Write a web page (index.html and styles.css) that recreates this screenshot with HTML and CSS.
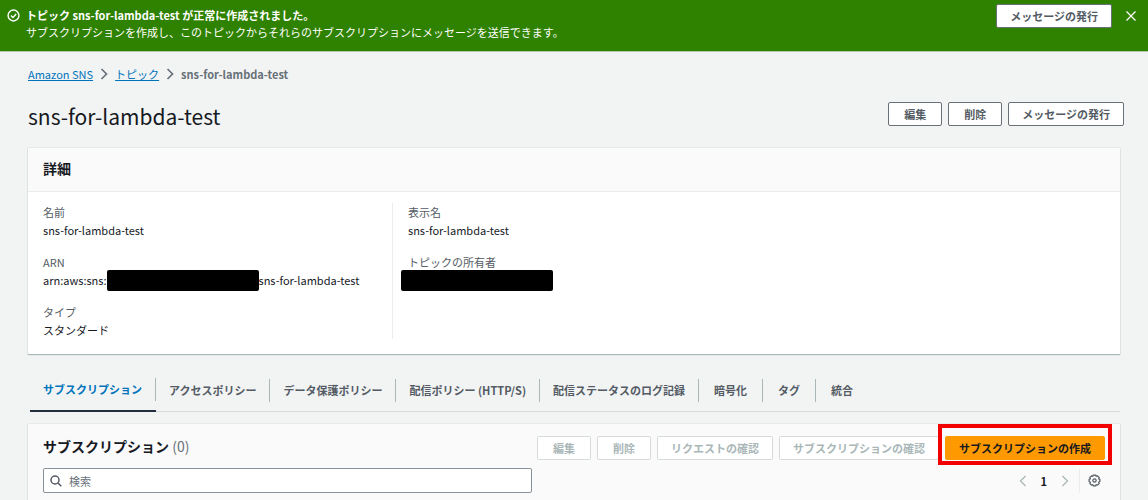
FILE: index.html
```html
<!DOCTYPE html>
<html lang="ja">
<head>
<meta charset="utf-8">
<meta name="viewport" content="width=device-width, initial-scale=1">
<title>sns-for-lambda-test - Amazon SNS</title>
<link rel="stylesheet" href="styles.css">
</head>
<body>
<div class="flash" role="status">
  <svg class="flash-icon" viewBox="0 0 16 16" aria-hidden="true"><circle cx="8" cy="8" r="6.7"/><path d="M4.8 8l2.5 2.5 4-4.4"/></svg>
  <div class="flash-text">
    <strong>トピック sns-for-lambda-test が正常に作成されました。</strong>
    <p>サブスクリプションを作成し、このトピックからそれらのサブスクリプションにメッセージを送信できます。</p>
  </div>
  <button class="btn" type="button">メッセージの発行</button>
  <button class="close" type="button" aria-label="閉じる"><svg viewBox="0 0 12 12"><path d="M1.5 1.5l9 9M10.5 1.5l-9 9"/></svg></button>
</div>
<main class="page">
  <nav class="crumbs" aria-label="パンくず">
    <a href="#">Amazon SNS</a>
    <svg viewBox="0 0 8 12" aria-hidden="true"><path d="M1.5 1l5 5-5 5"/></svg>
    <a href="#">トピック</a>
    <svg viewBox="0 0 8 12" aria-hidden="true"><path d="M1.5 1l5 5-5 5"/></svg>
    <span>sns-for-lambda-test</span>
  </nav>
  <header class="title-row">
    <h1>sns-for-lambda-test</h1>
    <div class="actions">
      <button class="btn" type="button">編集</button>
      <button class="btn" type="button">削除</button>
      <button class="btn" type="button">メッセージの発行</button>
    </div>
  </header>
  <section class="panel">
    <div class="panel-head"><h2>詳細</h2></div>
    <div class="details">
      <dl>
        <div><dt>名前</dt><dd>sns-for-lambda-test</dd></div>
        <div><dt>ARN</dt><dd class="arn">arn:aws:sns:<span class="mask"></span>sns-for-lambda-test</dd></div>
        <div><dt>タイプ</dt><dd>スタンダード</dd></div>
      </dl>
      <dl>
        <div><dt>表示名</dt><dd>sns-for-lambda-test</dd></div>
        <div><dt>トピックの所有者</dt><dd class="owner"><span class="mask"></span></dd></div>
      </dl>
    </div>
  </section>
  <div class="tabs" role="tablist">
    <button class="tab" type="button" role="tab" aria-selected="true"><span>サブスクリプション</span></button>
    <button class="tab" type="button" role="tab" aria-selected="false"><span>アクセスポリシー</span></button>
    <button class="tab" type="button" role="tab" aria-selected="false"><span>データ保護ポリシー</span></button>
    <button class="tab" type="button" role="tab" aria-selected="false"><span>配信ポリシー (HTTP/S)</span></button>
    <button class="tab" type="button" role="tab" aria-selected="false"><span>配信ステータスのログ記録</span></button>
    <button class="tab short" type="button" role="tab" aria-selected="false"><span>暗号化</span></button>
    <button class="tab short" type="button" role="tab" aria-selected="false"><span>タグ</span></button>
    <button class="tab short" type="button" role="tab" aria-selected="false"><span>統合</span></button>
  </div>
  <section class="panel subs">
    <div class="subs-head">
      <h2>サブスクリプション <span>(0)</span></h2>
      <div class="actions">
        <button class="btn" type="button" disabled>編集</button>
        <button class="btn" type="button" disabled>削除</button>
        <button class="btn" type="button" disabled>リクエストの確認</button>
        <button class="btn" type="button" disabled>サブスクリプションの確認</button>
        <div class="marked"><button class="btn primary" type="button">サブスクリプションの作成</button></div>
      </div>
    </div>
    <div class="tools">
      <label class="search">
        <svg viewBox="0 0 12 12" aria-hidden="true"><circle cx="5" cy="5" r="4"/><path d="M8 8l3.3 3.3"/></svg>
        <input type="text" placeholder="検索" aria-label="検索">
      </label>
      <div class="pager">
        <button type="button" aria-label="前へ"><svg viewBox="0 0 8 12"><path d="M6.5 1l-5 5 5 5"/></svg></button>
        <span>1</span>
        <button type="button" aria-label="次へ"><svg viewBox="0 0 8 12"><path d="M1.5 1l5 5-5 5"/></svg></button>
        <button class="gear" type="button" aria-label="設定"><svg viewBox="0 0 14 14"><path d="M5.7 1.2h2.6l.5 1.3 1.4-.5L12 3.8l-.5 1.4 1.3.5v2.6l-1.3.5.5 1.4-1.8 1.8-1.4-.5-.5 1.3H5.7l-.5-1.3-1.4.5L2 10.200l.5-1.400-1.300-.5V5.700l1.300-.5L2 3.800 3.800 2l1.400.5z"/><circle cx="7" cy="7" r="1.800"/></svg></button>
      </div>
    </div>
  </section>
</main>
</body>
</html>
```
FILE: styles.css
```css
* { box-sizing: border-box; }
body {
  margin: 0;
  background: #f2f4f4;
  color: #16191f;
  font: 11px/18px "Noto Sans CJK JP", sans-serif;
  overflow: hidden;
}
h1, h2, p, dl, dd { margin: 0; font-weight: 400; }
button, input { font: inherit; color: inherit; }
button { cursor: pointer; }
svg { display: block; fill: none; stroke: currentColor; }

.btn {
  height: 24px;
  min-width: 54px;
  padding: 0 13px;
  border: 1px solid #687078;
  border-radius: 2px;
  background: #fff;
  color: #545b64;
  font-weight: 700;
  line-height: 20px;
  white-space: nowrap;
}
.btn:disabled { border-color: #d5dbdb; color: #aab7b8; }
.btn.primary { border-color: #f90; background: #f90; color: #16191f; }

.flash {
  display: flex;
  align-items: flex-start;
  min-height: 52px;
  padding: 4px 11px 0 7px;
  border-bottom: 1px solid #b4c8ac;
  background: #2f8100;
  color: #fff;
}
.flash-icon { width: 13px; height: 13px; margin: 5px 6px 0 0; stroke-width: 1.7; }
.flash-text { flex: 1; padding-top: 3px; line-height: 17px; }
.flash-text strong { display: block; }
.close { margin: 6px 0 0 13px; padding: 0; border: 0; background: none; }
.close svg { width: 12px; height: 12px; stroke-width: 1.3; }

.page { padding: 13px 28px 0; }
.crumbs { display: flex; align-items: center; gap: 7px; color: #687078; }
.crumbs a { color: #0073bb; }
.crumbs svg { width: 8px; height: 12px; stroke-width: 1.7; }
.crumbs span { font-weight: 700; }

.title-row { display: flex; align-items: center; justify-content: space-between; height: 32px; margin: 17px -4px 16px 0; }
h1 { font-size: 21px; line-height: 30px; }
.actions { display: flex; gap: 6px; }
.title-row .actions { margin-top: -4px; }

.panel { background: #fff; box-shadow: 0 1px 1px #aab7b8, 0 0 1px #aab7b8; }
.panel-head { height: 44px; padding: 10px 15px; border-bottom: 1px solid #eaeded; background: #fafafa; }
h2 { font-size: 14px; line-height: 20px; font-weight: 700; }
.details { display: grid; grid-template-columns: 1fr 2fr; padding: 11px 30px 15px 15px; }
.details dl { display: flex; flex-direction: column; gap: 14px; min-height: 134px; }
.details dl + dl { padding-left: 15px; border-left: 1px solid #eaeded; }
dt { color: #545b64; }
dd { height: 18px; }
.arn, .owner { display: flex; align-items: center; }
.mask { width: 152px; height: 21px; border-radius: 2px; background: #000; }
.owner .mask { margin-left: -7px; }

.tabs { display: flex; height: 34px; margin: 24px 0 12px 2px; border-bottom: 1px solid #d5dbdb; }
.tab { height: 34px; padding: 0 0 10px; border: 0; background: none; color: #545b64; font-weight: 700; white-space: nowrap; }
.tab span { display: block; padding: 0 13px; border-right: 1px solid #aab7b8; line-height: 23px; }
.tab.short span { padding: 0 15px; }
.tab:last-child span { border: 0; }
.tab[aria-selected="true"] { border-bottom: 2px solid #232f3e; padding-bottom: 9px; color: #0073bb; }

.subs { padding: 12px 15px; background: #fafafa; min-height: 90px; }
.subs-head { display: flex; justify-content: space-between; }
.subs-head h2 { line-height: 20px; }
h2 span { color: #687078; font-weight: 400; }
.marked { position: relative; }
.marked::after { content: ""; position: absolute; inset: -12px -7px -5px; border: 4px solid #f20000; }
.tools { display: flex; justify-content: space-between; margin-top: 8px; }
.search { display: flex; align-items: center; gap: 7px; width: 46%; height: 25px; padding: 0 6px; border: 1px solid #879196; border-radius: 2px; background: #fff; color: #545b64; }
.search svg { width: 12px; height: 12px; stroke-width: 1.5; }
.search input { flex: 1; min-width: 0; padding: 0; border: 0; outline: 0; background: none; }
.search input::placeholder { color: #687078; opacity: 1; }
.pager { display: flex; align-items: center; gap: 14px; }
.pager span { font-weight: 700; }
.pager button { padding: 0; border: 0; background: none; color: #aab7b8; }
.pager svg { width: 8px; height: 12px; stroke-width: 1.3; }
.pager .gear { height: 24px; margin-left: -4px; padding: 0 4px 0 8px; border-left: 1px solid #eaeded; color: #545b64; }
.pager .gear svg { width: 13px; height: 13px; }
```
